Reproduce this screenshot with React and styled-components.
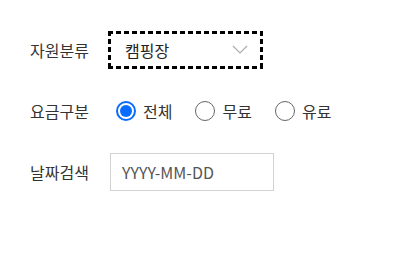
import React from 'react';
import styled, { createGlobalStyle } from 'styled-components';

const GlobalStyle = createGlobalStyle`
  body {
    margin: 0;
    background: #fff;
    font-family: 'Noto Sans CJK KR', 'Noto Sans', sans-serif;
    color: #333;
  }
`;

const Form = styled.div`
  display: flex;
  flex-direction: column;
  gap: 23px;
  padding: 31px 0 0 30px;
`;

const Row = styled.div`
  display: flex;
  align-items: center;
  height: 38px;
`;

const Label = styled.div`
  width: 80px;
  font-size: 16px;
  color: #333;
`;

// focus ring drawn as square dashes
const hDash = 'repeating-linear-gradient(90deg, #000 0 5px, transparent 5px 8px)';
const vDash = 'repeating-linear-gradient(180deg, #000 0 5px, transparent 5px 8px)';

const SelectBox = styled.div`
  box-sizing: border-box;
  width: 155px;
  height: 38px;
  margin-left: -2px;
  display: flex;
  align-items: center;
  justify-content: space-between;
  padding: 0 15px 0 17px;
  background:
    ${hDash} left top / 100% 3px no-repeat,
    ${hDash} left bottom / 100% 3px no-repeat,
    ${vDash} left top / 3px 100% no-repeat,
    ${vDash} right top / 3px 100% no-repeat;
  font-size: 16px;
  color: #222;
`;

const Chevron = styled.svg`
  width: 16px;
  height: 9px;
  margin-top: -2px;
`;

const RadioGroup = styled.div`
  display: flex;
  align-items: center;
  gap: 23px;
  margin-left: 6px;
`;

const RadioItem = styled.label`
  display: flex;
  align-items: center;
  gap: 7px;
  font-size: 16px;
  color: #333;
`;

const RadioCircle = styled.span`
  box-sizing: border-box;
  width: 20px;
  height: 20px;
  border-radius: 50%;
  border: ${p => (p.checked ? '2px solid #0a6cff' : '1px solid #666')};
  display: flex;
  align-items: center;
  justify-content: center;

  &::after {
    content: '';
    display: ${p => (p.checked ? 'block' : 'none')};
    width: 12px;
    height: 12px;
    border-radius: 50%;
    background: #0a6cff;
  }
`;

const DateInput = styled.div`
  box-sizing: border-box;
  width: 164px;
  height: 38px;
  border: 1px solid #d3d3d3;
  display: flex;
  align-items: center;
  padding-left: 11px;
  font-size: 16px;
  color: #555;
`;

const radios = [
  { label: '전체', checked: true },
  { label: '무료', checked: false },
  { label: '유료', checked: false },
];

export default function App() {
  return (
    <>
      <GlobalStyle />
      <Form>
        <Row>
          <Label>자원분류</Label>
          <SelectBox>
            <span>캠핑장</span>
            <Chevron viewBox="0 0 16 9">
              <path d="M1 1 L8 8 L15 1" fill="none" stroke="#aaa" strokeWidth="1.1" />
            </Chevron>
          </SelectBox>
        </Row>
        <Row>
          <Label>요금구분</Label>
          <RadioGroup>
            {radios.map(r => (
              <RadioItem key={r.label}>
                <RadioCircle checked={r.checked} />
                {r.label}
              </RadioItem>
            ))}
          </RadioGroup>
        </Row>
        <Row>
          <Label>날짜검색</Label>
          <DateInput>YYYY-MM-DD</DateInput>
        </Row>
      </Form>
    </>
  );
}
